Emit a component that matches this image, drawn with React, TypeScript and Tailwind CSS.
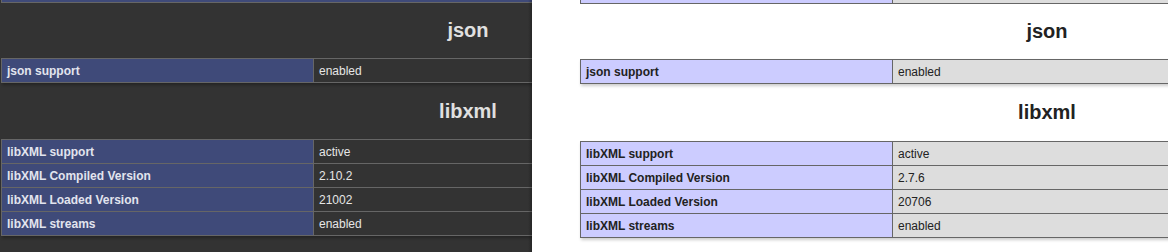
import React from "react";

type Row = [string, string];

const font = { fontFamily: '"Liberation Sans", Arial, sans-serif' };

function Table({ rows, dark }: { rows: Row[]; dark: boolean }) {
  return (
    <div
      className={
        dark
          ? "w-[934px] border-l border-b border-[#666] shadow-[1px_2px_3px_rgba(0,0,0,0.3)]"
          : "w-[934px] border-l border-b border-[#666] shadow-[1px_2px_3px_#ccc]"
      }
    >
      {rows.map(([k, v]) => (
        <div key={k} className="flex h-[24px] border-t border-[#666] text-[12px] leading-[14px]">
          <div
            className={
              dark
                ? "w-[312px] shrink-0 border-r border-[#666] bg-[#3f4a79] px-[5px] font-bold text-[#e2e4ee] flex items-center"
                : "w-[312px] shrink-0 border-r border-[#666] bg-[#ccccff] px-[5px] font-bold text-[#222] flex items-center"
            }
          >
            {k}
          </div>
          <div
            className={
              dark
                ? "flex-1 border-r border-[#666] bg-[#333] px-[5px] text-[#e6e6e6] flex items-center"
                : "flex-1 border-r border-[#666] bg-[#dddddd] px-[5px] text-[#222] flex items-center"
            }
          >
            {v}
          </div>
        </div>
      ))}
    </div>
  );
}

function Heading({ text, dark, h }: { text: string; dark: boolean; h: string }) {
  return (
    <div className={`${h} w-[934px] flex items-center justify-center`}>
      <h2
        className={
          dark
            ? "text-[20px] leading-[23px] font-bold text-[#e0e0e0]"
            : "text-[20px] leading-[23px] font-bold text-[#222]"
        }
      >
        {text}
      </h2>
    </div>
  );
}

function Panel({ dark, values }: { dark: boolean; values: string[] }) {
  return (
    <div className="flex flex-col">
      {dark ? (
        <div className="h-[3px] w-[934px] border-l border-b border-[#666] bg-[#3f4a79]" />
      ) : (
        <div className="h-[4px] w-[934px] flex border-l border-b border-[#666]">
          <div className="w-[312px] border-r border-[#666] bg-[#ccccff]" />
          <div className="flex-1 bg-[#dddddd]" />
        </div>
      )}
      <Heading text="json" dark={dark} h="h-[55px]" />
      <Table dark={dark} rows={[["json support", "enabled"]]} />
      <Heading text="libxml" dark={dark} h={dark ? "h-[56px]" : "h-[57px]"} />
      <Table
        dark={dark}
        rows={[
          ["libXML support", values[0]],
          ["libXML Compiled Version", values[1]],
          ["libXML Loaded Version", values[2]],
          ["libXML streams", values[3]],
        ]}
      />
    </div>
  );
}

export default function App() {
  return (
    <div className="flex w-[1168px] h-[252px] overflow-hidden bg-white" style={font}>
      <div className="relative w-[532px] h-full shrink-0 overflow-hidden bg-[#333] pl-[1px]">
        <Panel dark values={["active", "2.10.2", "21002", "enabled"]} />
        <div className="absolute right-0 top-0 h-full w-[4px] bg-gradient-to-r from-transparent to-[rgba(0,0,0,0.25)]" />
      </div>
      <div className="w-[636px] h-full shrink-0 overflow-hidden bg-white pl-[48px]">
        <Panel dark={false} values={["active", "2.7.6", "20706", "enabled"]} />
      </div>
    </div>
  );
}
